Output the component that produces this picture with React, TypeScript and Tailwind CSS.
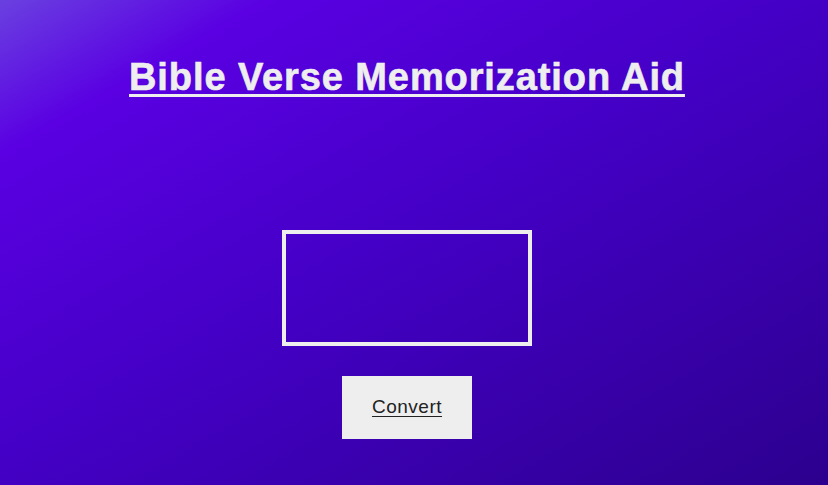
export default function App() {
  return (
    <div
      className="h-[485px] w-[828px] overflow-hidden bg-[linear-gradient(150deg,#6a40e0_0%,#5a00e2_16%,#4300c4_50%,#2c008e_100%)]"
      style={{ fontFamily: '"Liberation Sans", Arial, sans-serif' }}
    >
      <div className="flex w-[814px] flex-col items-center">
        <h1 className="mt-[55px] text-[38px] font-bold leading-[44px] tracking-[0.9px] text-[#eeeeee] underline decoration-[3px] underline-offset-[4px] [-webkit-text-stroke:0.6px_#eeeeee]">
          Bible Verse Memorization Aid
        </h1>
        <textarea className="mt-[131px] h-[116px] w-[250px] resize-none border-4 border-[#eeeeee] bg-transparent outline-none" />
        <button className="mt-[30px] h-[63px] w-[130px] bg-[#eeeeee] text-[19px] tracking-[0.5px] text-[#222222] underline underline-offset-[3px]">
          Convert
        </button>
      </div>
    </div>
  );
}
